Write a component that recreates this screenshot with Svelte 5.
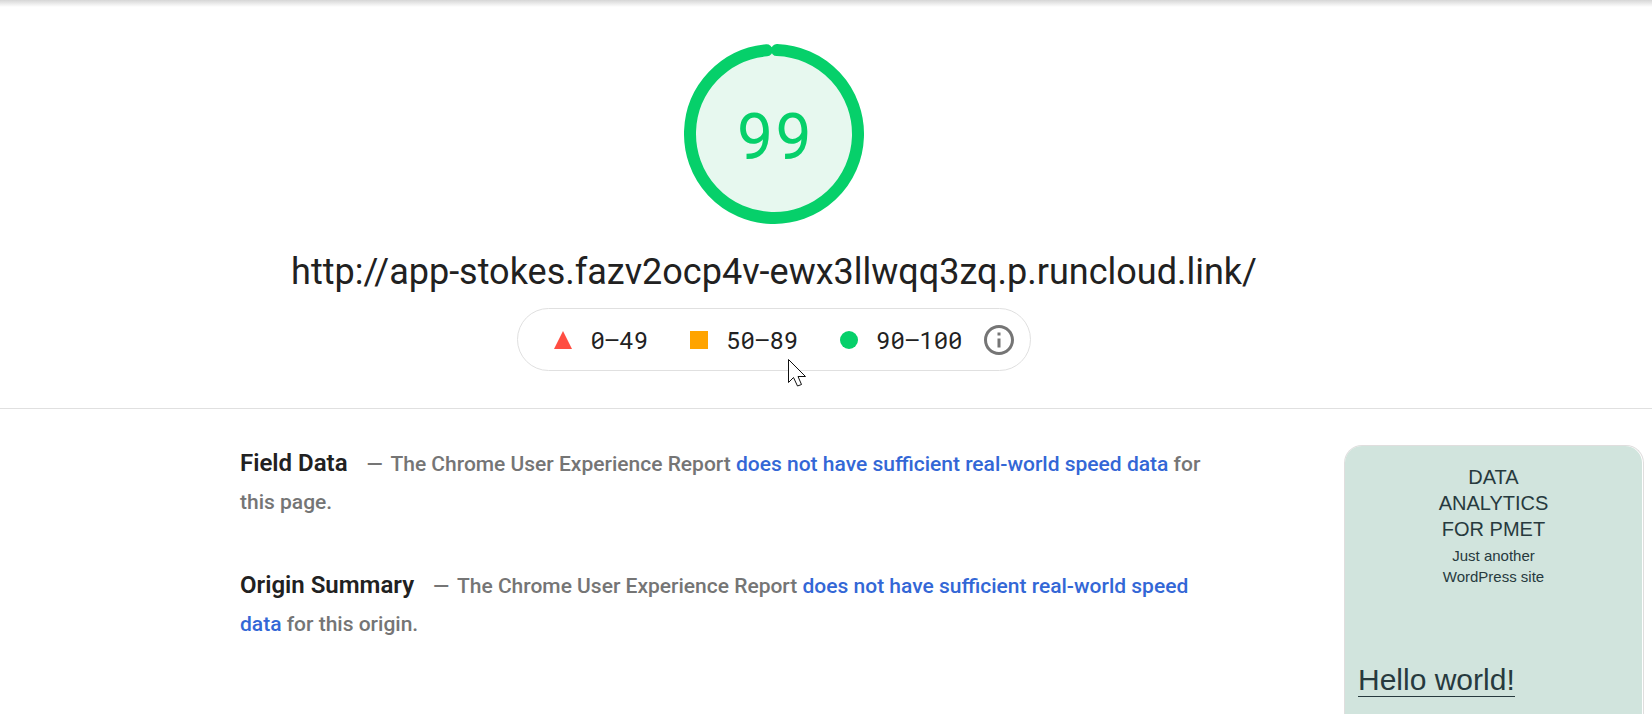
<script lang="ts">
  interface Range {
    key: 'fail' | 'average' | 'pass';
    label: string;
  }

  interface Summary {
    title: string;
    scope: string;
  }

  const score = 99;
  const url = 'http://app-stokes.fazv2ocp4v-ewx3llwqq3zq.p.runcloud.link/';

  const ranges: Range[] = [
    { key: 'fail', label: '0–49' },
    { key: 'average', label: '50–89' },
    { key: 'pass', label: '90–100' }
  ];

  const summaries: Summary[] = [
    { title: 'Field Data', scope: 'page' },
    { title: 'Origin Summary', scope: 'origin' }
  ];

  const radius = 84;
  const circumference = 2 * Math.PI * radius;
  // The round caps eat into the gap, so the arc stops a little short.
  const arc = (score / 100) * circumference - 6;
</script>

<div class="report">
  <header class="overview">
    <div class="gauge">
      <svg viewBox="0 0 180 180" aria-hidden="true">
        <circle class="gauge-base" cx="90" cy="90" r="84" />
        <circle
          class="gauge-arc"
          cx="90"
          cy="90"
          r={radius}
          stroke-dasharray="{arc} {circumference}"
          transform="rotate(-88 90 90)"
        />
      </svg>
      <div class="gauge-score">{score}</div>
    </div>
    <h1 class="url">{url}</h1>
    <div class="scale">
      {#each ranges as range (range.key)}
        <span class="range">
          <svg class="mark {range.key}" viewBox="0 0 18 18" aria-hidden="true">
            {#if range.key === 'fail'}
              <path d="M9 0 18 18H0z" />
            {:else if range.key === 'average'}
              <path d="M0 0h18v18H0z" />
            {:else}
              <circle cx="9" cy="9" r="9" />
            {/if}
          </svg>
          {range.label}
        </span>
      {/each}
      <button class="info" type="button" aria-label="About the score scale">
        <svg viewBox="2 2 20 20" aria-hidden="true">
          <path
            d="M11 17h2v-6h-2v6zm1-15C6.480 2 2 6.480 2 12s4.480 10 10 10 10-4.480 10-10S17.520 2 12 2zm0 18c-4.410 0-8-3.590-8-8s3.590-8 8-8 8 3.590 8 8-3.590 8-8 8zM11 9h2V7h-2v2z"
          />
        </svg>
      </button>
      <svg class="pointer" viewBox="0 0 19 28" aria-hidden="true">
        <path d="M.5 .5v23l5-5 4 8.500 4-1.500-3.500-8h7.500z" />
      </svg>
    </div>
  </header>

  <main class="details">
    <div class="summaries">
      {#each summaries as summary (summary.title)}
        <section class="summary">
          <h2>{summary.title}</h2>
          <p>
            <span class="dash">—</span>
            The Chrome User Experience Report
            <a href="#{summary.scope}">does not have sufficient real-world speed data</a>
            for this {summary.scope}.
          </p>
        </section>
      {/each}
    </div>

    <aside class="preview">
      <div class="preview-page">
        <div class="site-title">DATA ANALYTICS FOR PMET</div>
        <div class="site-tagline">Just another WordPress site</div>
        <a class="post-title" href="#hello-world">Hello world!</a>
      </div>
    </aside>
  </main>
</div>

<style>
  :global(body) {
    margin: 0;
    background: #fff;
  }

  .report {
    height: 100vh;
    overflow: hidden;
    box-sizing: border-box;
    color: #212121;
    font-family: Roboto, 'Liberation Sans', sans-serif;
    background: linear-gradient(#d6d6d6, #fff) 0 0 / 100% 7px no-repeat;
  }

  .overview {
    display: flex;
    flex-direction: column;
    align-items: center;
    padding: 44px 104px 37px 0;
    border-bottom: 1px solid #e0e0e0;
  }

  .gauge {
    display: grid;
    width: 180px;
    height: 180px;
    place-items: center;
  }

  .gauge > * {
    grid-area: 1 / 1;
  }

  .gauge svg {
    width: 180px;
    height: 180px;
  }

  .gauge-base {
    fill: #e7f8ef;
  }

  .gauge-arc {
    fill: none;
    stroke: #06d06a;
    stroke-width: 12;
    stroke-linecap: round;
  }

  .gauge-score {
    color: #06d06a;
    font-family: 'Roboto Mono', Roboto, sans-serif;
    font-size: 64px;
    line-height: 72px;
  }

  .url {
    margin: 24px 0 12px;
    font-size: 36px;
    font-weight: 400;
    line-height: 48px;
  }

  .scale {
    position: relative;
    display: flex;
    align-items: center;
    gap: 42px;
    height: 61px;
    padding: 0 16px 0 36px;
    border: 1px solid #e0e0e0;
    border-radius: 32px;
    font-family: 'Roboto Mono', 'DejaVu Sans Mono', monospace;
    font-size: 24px;
    line-height: 32px;
  }

  .range {
    display: flex;
    align-items: center;
    gap: 18px;
  }

  .mark {
    width: 18px;
    height: 18px;
  }

  .fail {
    fill: #ff4e42;
  }

  .average {
    fill: #ffa400;
  }

  .pass {
    fill: #06d06a;
  }

  .info {
    display: flex;
    margin: 0 0 0 -21px;
    padding: 0;
    border: 0;
    background: none;
  }

  .info svg {
    width: 30px;
    height: 30px;
    fill: #757575;
  }

  .pointer {
    position: absolute;
    top: 50px;
    left: 270px;
    width: 19px;
    height: 28px;
    fill: #fff;
    stroke: #111;
  }

  .details {
    display: flex;
    justify-content: space-between;
    padding: 36px 8px 0 240px;
  }

  .summaries {
    flex: 0 1 984px;
  }

  .summary {
    margin-bottom: 45px;
    line-height: 36px;
  }

  .summary h2,
  .summary p {
    display: inline;
    margin: 0;
    font-weight: 500;
  }

  .summary h2 {
    margin-right: 15px;
    font-size: 24px;
    font-weight: 600;
  }

  .summary p {
    color: #757575;
    font-size: 21px;
  }

  .dash {
    margin-right: 3px;
  }

  .summary a {
    color: #3367d6;
    text-decoration: none;
  }

  .preview {
    flex: none;
    width: 297px;
    padding-right: 1px;
    border: 1px solid #e0dede;
    border-bottom: 0;
    border-radius: 18px 18px 0 0;
  }

  .preview-page {
    display: flex;
    flex-direction: column;
    height: 320px;
    padding: 18px 13px 0;
    border-radius: 17px 17px 0 0;
    background: #d1e4dd;
    color: #273a3e;
    font-family: 'Liberation Sans', Arial, sans-serif;
  }

  .site-title,
  .site-tagline {
    width: 120px;
    align-self: center;
    text-align: center;
  }

  .site-title {
    font-size: 20px;
    line-height: 26px;
  }

  .site-tagline {
    margin-top: 3px;
    font-size: 15px;
    line-height: 21px;
  }

  .post-title {
    align-self: flex-start;
    margin-top: 77px;
    border-bottom: 1px solid #273a3e;
    color: inherit;
    font-size: 30px;
    line-height: 32px;
    text-decoration: none;
  }
</style>
